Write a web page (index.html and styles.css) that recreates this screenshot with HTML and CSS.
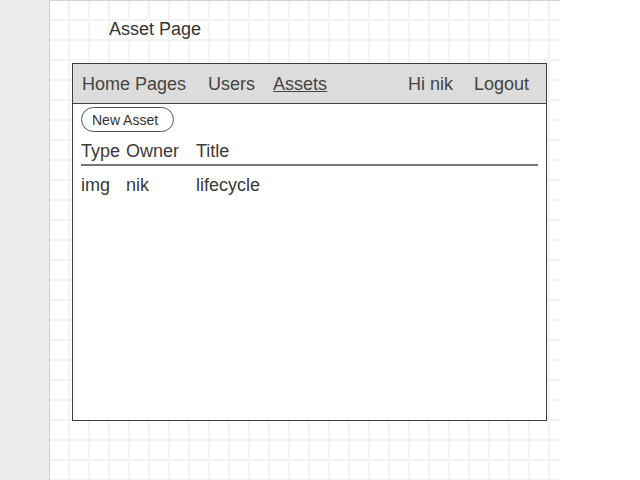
FILE: index.html
```html
<!DOCTYPE html>
<html>
<head>
<meta charset="utf-8">
<link rel="stylesheet" href="styles.css">
</head>
<body>
<div class="sidebar"></div>
<div class="canvas">
  <div class="page-title">Asset Page</div>
  <div class="frame">
    <nav class="nav">
      <span class="nav-item">Home Pages</span>
      <span class="nav-item users">Users</span>
      <span class="nav-item assets">Assets</span>
      <span class="spacer"></span>
      <span class="nav-item">Hi nik</span>
      <span class="nav-item logout">Logout</span>
    </nav>
    <div class="content">
      <button class="btn">New Asset</button>
      <div class="table">
        <div class="row head">
          <span>Type</span><span>Owner</span><span>Title</span>
        </div>
        <div class="row">
          <span>img</span><span>nik</span><span>lifecycle</span>
        </div>
      </div>
    </div>
  </div>
</div>
</body>
</html>
```
FILE: styles.css
```css
html, body {
  margin: 0;
  padding: 0;
  height: 480px;
  background: #ffffff;
  font-family: "Liberation Sans", Arial, sans-serif;
  color: #3a3a3a;
}
body {
  display: flex;
  align-items: stretch;
}
.sidebar {
  width: 49px;
  background: #ececec;
  border-right: 1px solid #cfcfcf;
}
.canvas {
  width: 510px;
  border-top: 1px solid #d6d6d6;
  box-sizing: border-box;
  padding: 18px 0 0 22px;
  background-color: #ffffff;
  background-image:
    linear-gradient(to right, transparent 18px, #f3f3f3 18px, #f3f3f3 20px),
    linear-gradient(to bottom, transparent 18px, #f3f3f3 18px, #f3f3f3 20px);
  background-size: 20px 20px;
  background-position: 0 0;
}
.page-title {
  font-size: 18px;
  line-height: 20px;
  margin-left: 37px;
  color: #333;
}
.frame {
  margin-top: 24px;
  width: 475px;
  height: 358px;
  box-sizing: border-box;
  border: 1px solid #3c3c3c;
  background: #ffffff;
}
.nav {
  display: flex;
  align-items: center;
  height: 39px;
  background: #dcdcdc;
  border-bottom: 1px solid #444;
  padding: 0 17px 0 9px;
  font-size: 18px;
}
.nav-item {
  line-height: 20px;
  color: #444;
}
.users { margin-left: 22px; }
.assets { margin-left: 18px; text-decoration: underline; }
.logout { margin-left: 21px; }
.spacer { flex: 1; }
.content {
  padding: 3px 8px 0 8px;
}
.btn {
  display: block;
  width: 93px;
  height: 25px;
  box-sizing: border-box;
  border: 1px solid #555;
  border-radius: 13px;
  background: #fff;
  font-family: "Liberation Sans", Arial, sans-serif;
  font-size: 14px;
  color: #333;
  text-align: left;
  padding: 0 0 0 10px;
  line-height: 22px;
}
.table {
  margin-top: 9px;
  font-size: 18px;
}
.row {
  display: grid;
  grid-template-columns: 45px 70px 1fr;
  line-height: 20px;
  color: #3a3a3a;
}
.row.head {
  padding-bottom: 3px;
  border-bottom: 2px solid #777;
  margin-bottom: 9px;
}
```
